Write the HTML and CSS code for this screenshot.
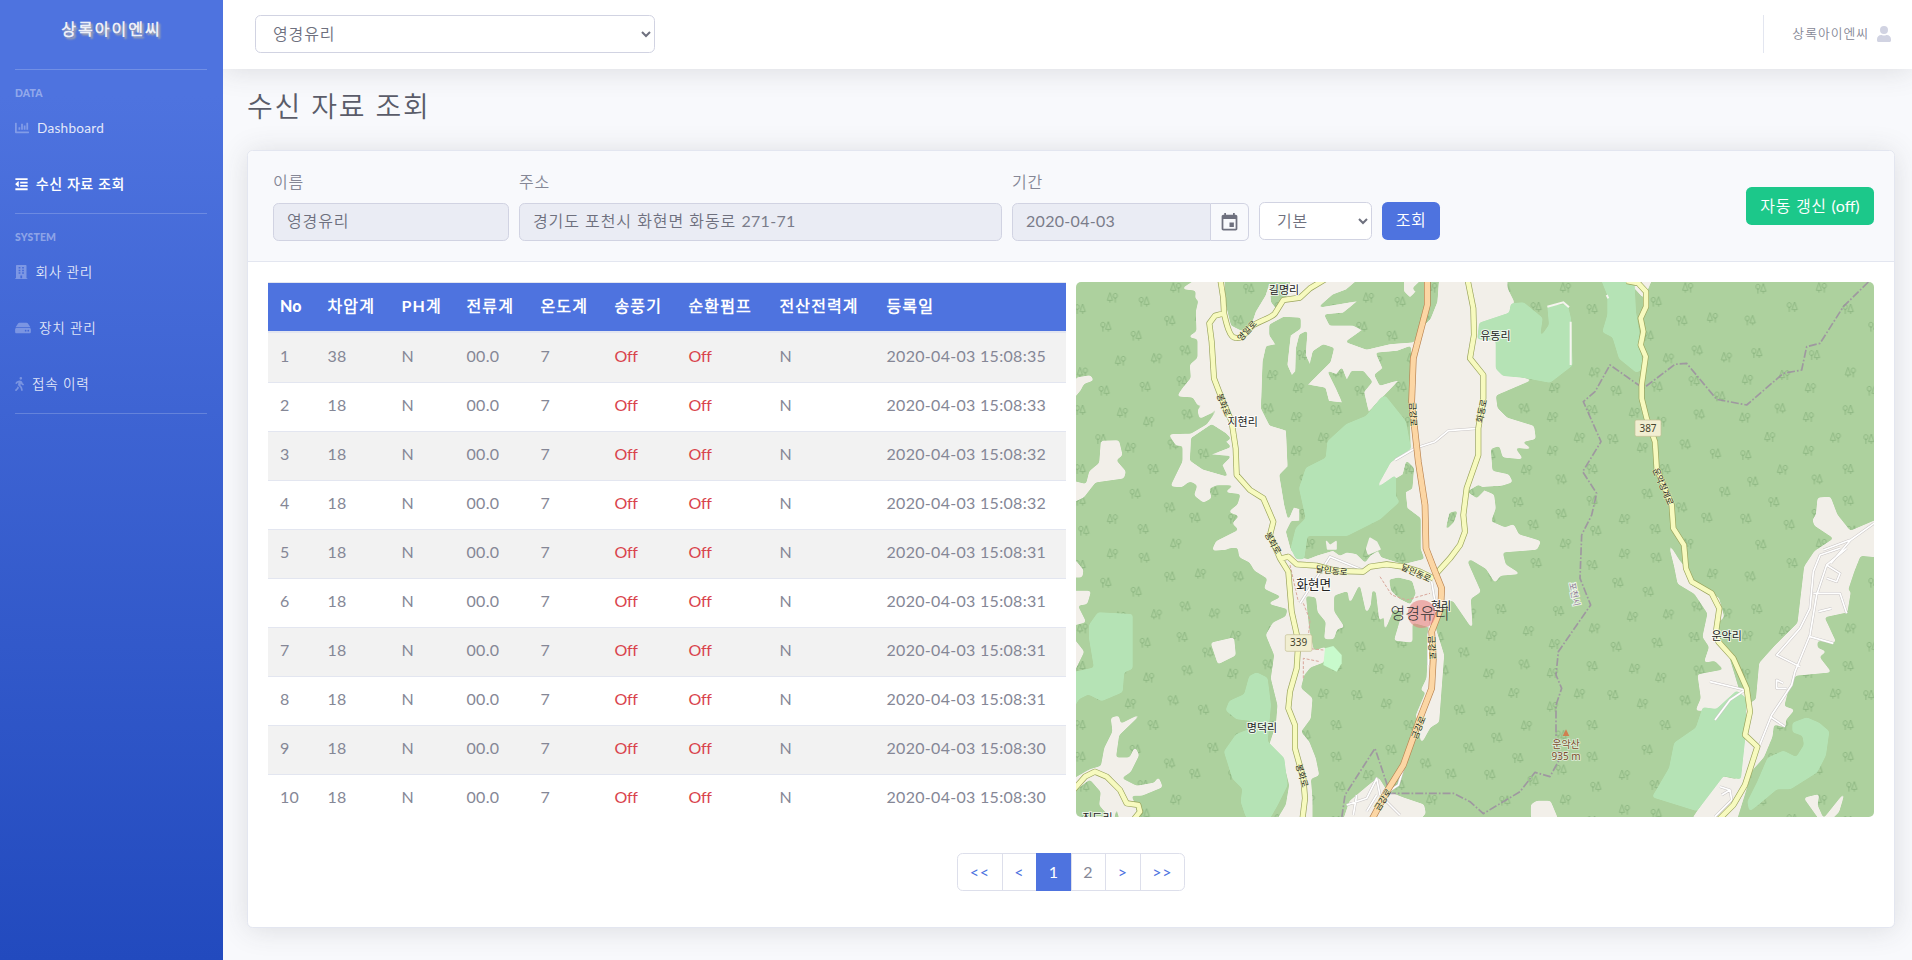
FILE: index.html
```html
<!DOCTYPE html>
<html lang="ko">
<head>
<meta charset="utf-8">
<title>수신 자료 조회</title>
<link rel="stylesheet" href="styles.css">
</head>
<body>
<div class="wrapper">
  <nav class="sidebar">
    <a class="brand">상록아이엔씨</a>
    <hr class="divider">
    <div class="heading">DATA</div>
    <a class="nav-link"><svg class="ico" width="14" height="14" viewBox="0 0 512 512"><path d="M332.800 320h38.400c6.400 0 12.800-6.400 12.800-12.800V172.800c0-6.400-6.400-12.800-12.800-12.800h-38.400c-6.400 0-12.800 6.400-12.800 12.800v134.400c0 6.400 6.400 12.800 12.800 12.800zm96 0h38.400c6.400 0 12.800-6.400 12.800-12.800V76.800c0-6.400-6.400-12.800-12.800-12.800h-38.400c-6.400 0-12.800 6.400-12.800 12.800v230.400c0 6.400 6.400 12.800 12.800 12.800zm-288 0h38.400c6.400 0 12.800-6.400 12.800-12.800v-70.400c0-6.400-6.400-12.800-12.800-12.800h-38.400c-6.400 0-12.800 6.400-12.800 12.800v70.400c0 6.400 6.400 12.800 12.800 12.800zm96 0h38.400c6.400 0 12.800-6.400 12.800-12.800V108.800c0-6.400-6.400-12.800-12.800-12.800h-38.400c-6.400 0-12.800 6.400-12.800 12.800v198.400c0 6.400 6.400 12.800 12.800 12.800zM496 384H64V80c0-8.800-7.200-16-16-16H16C7.200 64 0 71.200 0 80v336c0 17.700 14.300 32 32 32h464c8.800 0 16-7.200 16-16v-32c0-8.800-7.200-16-16-16z"/></svg><span class="latin">Dashboard</span></a>
    <a class="nav-link active"><svg class="ico" width="13" height="14" viewBox="0 0 448 512"><path d="M0 42h448v70H0zM176 170h272v66H176zM176 292h272v66H176zM0 412h448v70H0zM4 250l96-92c10-9 24-4 24 10v180c0 14-14 19-24 10L4 272c-6-6-6-16 0-22z"/></svg><span>수신 자료 조회</span></a>
    <hr class="divider">
    <div class="heading">SYSTEM</div>
    <a class="nav-link"><svg class="ico" width="12.500" height="14" viewBox="0 0 448 512"><path fill-rule="evenodd" d="M436 480h-20V24c0-13-11-24-24-24H56C43 0 32 11 32 24v456H12c-7 0-12 5-12 12v20h448v-20c0-7-5-12-12-12zM128 76h64v56h-64zM128 172h64v56h-64zM128 268h64v56h-64zM256 76h64v56h-64zM256 172h64v56h-64zM256 268h64v56h-64zM192 384h64v96h-64z"/></svg><span>회사 관리</span></a>
    <a class="nav-link"><svg class="ico" width="16" height="14" viewBox="0 0 576 512"><path fill-rule="evenodd" d="M576 304v96c0 27-21 48-48 48H48c-27 0-48-21-48-48v-96c0-27 21-48 48-48h480c27 0 48 21 48 48zm-48-80c11 0 22 2 32 7L463 86c-9-14-24-22-40-22H153c-16 0-31 8-40 22L16 231c10-5 21-7 32-7h480zm-48 96a32 32 0 1 0 0 64 32 32 0 0 0 0-64zm-96 0a32 32 0 1 0 0 64 32 32 0 0 0 0-64z"/></svg><span>장치 관리</span></a>
    <a class="nav-link"><svg class="ico" width="9" height="14" viewBox="0 0 320 512"><path d="M208 96a48 48 0 1 0 0-96 48 48 0 0 0 0 96zm94.500 149.100-23.300-11.800-9.700-29.400c-14.700-44.600-55.700-75.800-102.200-75.900-36-.1-55.900 10.100-93.300 25.200-21.600 8.700-39.300 25.200-49.700 46.200L17.600 213c-7.800 15.800-1.500 35 14.200 42.900 15.600 7.900 34.600 1.500 42.500-14.300L81 228c3.500-7 9.300-12.500 16.500-15.400l26.800-10.800-15.200 60.700c-5.200 20.800.4 42.900 14.900 58.800l59.900 65.400c7.200 7.900 12.300 17.400 14.900 27.700l18.300 73.300c4.300 17.100 21.700 27.600 38.800 23.300 17.100-4.300 27.600-21.700 23.300-38.800l-22.200-89c-2.600-10.300-7.700-19.900-14.900-27.700l-45.500-49.700 17.200-68.700 5.500 16.500c5.300 16.100 16.700 29.400 31.700 37l23.300 11.800c15.600 7.900 34.600 1.500 42.500-14.300 7.700-15.700 1.400-35.100-14.300-43zM73.600 385.800c-3.200 8.100-8 15.400-14.200 21.500l-50 50.100c-12.500 12.500-12.500 32.800 0 45.300s32.700 12.500 45.200 0l59.400-59.400c6.100-6.100 10.900-13.400 14.200-21.500l13.500-33.800c-55.300-60.300-38.700-41.800-47.400-53.700l-20.700 51.500z"/></svg><span>접속 이력</span></a>
    <hr class="divider">
  </nav>

  <div class="content">
    <header class="topbar">
      <select class="control site-select"><option>영경유리</option></select>
      <div class="user"><span>상록아이엔씨</span><svg width="14" height="16" viewBox="0 0 448 512"><path fill="#d1d3e2" d="M224 256A128 128 0 1 0 224 0a128 128 0 0 0 0 256zm90 32h-17a174 174 0 0 1-146 0h-17C60 288 0 348 0 422v42c0 27 21 48 48 48h352c27 0 48-21 48-48v-42c0-74-60-134-134-134z"/></svg></div>
    </header>

    <main class="main">
      <h1>수신 자료 조회</h1>
      <section class="card">
        <div class="card-header">
          <div class="field name"><label>이름</label><div class="control readonly">영경유리</div></div>
          <div class="field addr"><label>주소</label><div class="control readonly">경기도 포천시 화현면 화동로 <span class="latin">271-71</span></div></div>
          <div class="field date"><label>기간</label>
            <div class="group"><div class="control readonly latin">2020-04-03</div><div class="cal"><svg width="24" height="24" viewBox="0 0 24 24"><path fill="#6e707e" d="M17 12h-5v5h5v-5zM16 1v2H8V1H6v2H5c-1.110 0-1.990.9-1.990 2L3 19c0 1.100.89 2 2 2h14c1.100 0 2-.9 2-2V5c0-1.100-.9-2-2-2h-1V1h-2zm3 18H5V8h14v11z"/></svg></div></div>
          </div>
          <select class="control kind"><option>기본</option></select>
          <button class="btn primary">조회</button>
          <button class="btn success">자동 갱신 <span class="latin">(off)</span></button>
        </div>
        <div class="card-body">
          <div class="columns">
            <table>
              <colgroup><col class="c1"><col class="c2"><col class="c3"><col class="c4"><col class="c5"><col class="c6"><col class="c7"><col class="c8"><col class="c9"></colgroup>
              <thead><tr><th class="latin">No</th><th>차압계</th><th>PH계</th><th>전류계</th><th>온도계</th><th>송풍기</th><th>순환펌프</th><th>전산전력계</th><th>등록일</th></tr></thead>
              <tbody>
                <tr><td>1</td><td>38</td><td>N</td><td>00.0</td><td>7</td><td class="off">Off</td><td class="off">Off</td><td>N</td><td>2020-04-03 15:08:35</td></tr>
                <tr><td>2</td><td>18</td><td>N</td><td>00.0</td><td>7</td><td class="off">Off</td><td class="off">Off</td><td>N</td><td>2020-04-03 15:08:33</td></tr>
                <tr><td>3</td><td>18</td><td>N</td><td>00.0</td><td>7</td><td class="off">Off</td><td class="off">Off</td><td>N</td><td>2020-04-03 15:08:32</td></tr>
                <tr><td>4</td><td>18</td><td>N</td><td>00.0</td><td>7</td><td class="off">Off</td><td class="off">Off</td><td>N</td><td>2020-04-03 15:08:32</td></tr>
                <tr><td>5</td><td>18</td><td>N</td><td>00.0</td><td>7</td><td class="off">Off</td><td class="off">Off</td><td>N</td><td>2020-04-03 15:08:31</td></tr>
                <tr><td>6</td><td>18</td><td>N</td><td>00.0</td><td>7</td><td class="off">Off</td><td class="off">Off</td><td>N</td><td>2020-04-03 15:08:31</td></tr>
                <tr><td>7</td><td>18</td><td>N</td><td>00.0</td><td>7</td><td class="off">Off</td><td class="off">Off</td><td>N</td><td>2020-04-03 15:08:31</td></tr>
                <tr><td>8</td><td>18</td><td>N</td><td>00.0</td><td>7</td><td class="off">Off</td><td class="off">Off</td><td>N</td><td>2020-04-03 15:08:31</td></tr>
                <tr><td>9</td><td>18</td><td>N</td><td>00.0</td><td>7</td><td class="off">Off</td><td class="off">Off</td><td>N</td><td>2020-04-03 15:08:30</td></tr>
                <tr><td>10</td><td>18</td><td>N</td><td>00.0</td><td>7</td><td class="off">Off</td><td class="off">Off</td><td>N</td><td>2020-04-03 15:08:30</td></tr>
              </tbody>
            </table>

            <svg class="map" viewBox="18 21 2394 1605" preserveAspectRatio="none">
              <defs>
                <g id="a" class="tree"><path d="M-8 15V-2M-8-13c-5 0-6 3-6 8s3 7 6 7 6-3 6-7-1-8-6-8zM8 15V8M8-15L0 8h16z"/></g>
                <g id="b" class="tree"><path d="M8 15V-2M8-13c-5 0-6 3-6 8s3 7 6 7 6-3 6-7-1-8-6-8zM-8 15V8M-8-15l-8 23H0z"/></g>
                <filter id="soft" filterUnits="userSpaceOnUse" x="0" y="0" width="2440" height="1660" color-interpolation-filters="sRGB">
                  <feGaussianBlur in="SourceAlpha" stdDeviation="5"/>
                  <feComponentTransfer result="shape"><feFuncA type="linear" slope="5" intercept="-2"/></feComponentTransfer>
                  <feMorphology in="SourceGraphic" operator="dilate" radius="4" result="grown"/>
                  <feComposite in="grown" in2="shape" operator="in"/>
                </filter>
                <filter id="trim" filterUnits="userSpaceOnUse" x="0" y="0" width="2440" height="1660" color-interpolation-filters="sRGB">
                  <feGaussianBlur in="SourceAlpha" stdDeviation="5"/>
                  <feComponentTransfer result="shape"><feFuncA type="linear" slope="5" intercept="-2"/></feComponentTransfer>
                  <feComposite in="SourceGraphic" in2="shape" operator="in"/>
                </filter>
                <pattern id="forest" patternUnits="userSpaceOnUse" x="10" y="15" width="768" height="768" viewBox="10 15 768 768">
                  <rect x="10" y="15" width="768" height="768" fill="#add19e"/>
                  <use href="#b" x="128" y="68"/><use href="#a" x="222" y="80"/><use href="#a" x="30" y="102"/><use href="#a" x="107" y="155"/><use href="#a" x="198" y="182"/><use href="#a" x="299" y="137"/><use href="#b" x="318" y="38"/><use href="#a" x="345" y="226"/><use href="#b" x="152" y="257"/><use href="#b" x="260" y="250"/><use href="#b" x="38" y="292"/><use href="#a" x="102" y="347"/><use href="#a" x="225" y="335"/><use href="#a" x="336" y="318"/><use href="#a" x="30" y="405"/><use href="#b" x="158" y="413"/><use href="#b" x="237" y="440"/><use href="#a" x="351" y="418"/><use href="#a" x="92" y="492"/><use href="#b" x="182" y="518"/><use href="#a" x="249" y="582"/><use href="#a" x="309" y="508"/><use href="#a" x="400" y="536"/><use href="#a" x="195" y="656"/><use href="#b" x="128" y="732"/><use href="#a" x="298" y="697"/><use href="#a" x="374" y="728"/><use href="#a" x="219" y="762"/><use href="#a" x="41" y="767"/><use href="#a" x="428" y="650"/><use href="#a" x="491" y="731"/><use href="#a" x="536" y="41"/><use href="#a" x="504" y="136"/><use href="#b" x="608" y="300"/><use href="#a" x="594" y="400"/><use href="#b" x="680" y="426"/><use href="#b" x="686" y="339"/><use href="#b" x="761" y="488"/><use href="#b" x="680" y="527"/><use href="#a" x="697" y="240"/><use href="#b" x="719" y="38"/><use href="#a" x="630" y="96"/><use href="#b" x="602" y="584"/><use href="#a" x="705" y="613"/><use href="#a" x="575" y="681"/><use href="#a" x="705" y="716"/><use href="#a" x="621" y="749"/><use href="#b" x="392" y="128"/><use href="#b" x="434" y="247"/><use href="#a" x="524" y="234"/><use href="#b" x="497" y="314"/><use href="#a" x="413" y="364"/><use href="#b" x="489" y="428"/><use href="#b" x="564" y="486"/><use href="#a" x="491" y="540"/><use href="#a" x="512" y="620"/><use href="#a" x="30" y="582"/><use href="#a" x="30" y="677"/>
                </pattern>
                <path id="lanes" d="M975 555l60-35 60-20 40-33 90-7M690 985l90-140 110 45M1085 920l10 60-20 100v90M1000 1480l-15 50-30 20M830 1590l60-20 30-60 10 50 60 60M850 1620l10-60M890 1610l30-50M1935 1335l45-60 45-30-105-25M2330 820l-60 50-30 90-20 120-45 110-10 40-60 90-40 100M2310 820l-60 20-20 50-10 110-30 60-70 80 70 35M2230 955l80 0 20 60M2245 1010l40-10M2220 1085l70 20M2270 870l40 25-10 25-30-10M2150 1240h-30l0-25 20 10M2100 1325l45 30M1950 1535l30 10 5 30-50 50M1955 1560l25-15M2412 745l-70 50-60 70M2340 795l-80 30"/>
                <path id="roads" d="M450 10C456 40 462 60 462 115 468 140 478 188 495 188 520 195 530 165 550 150 575 135 605 128 615 115L640 75 690 68 720 40 770 10M462 115L435 122 418 145 425 200 432 310 455 370 485 440 497 520 500 600 540 645 580 670 610 740 600 780 630 850 655 890 665 1010 685 1100 680 1180 660 1250 655 1300 675 1350 675 1420 700 1510 705 1570 697 1635M635 850L655 845 680 868 740 872 800 888 880 890 900 875 950 868 1000 875 1050 890 1090 910M1192 10L1210 100 1212 180 1200 250 1240 300 1240 370 1225 460 1225 540 1190 640 1180 720 1185 770 1170 810 1140 850 1095 900M1670 18L1705 25 1728 50 1728 95 1712 130 1720 170 1712 210 1727 245 1715 330 1715 370 1730 430 1755 500 1760 580 1805 690 1810 760 1842 810 1848 880 1865 920 1925 955 1948 1000 1938 1070 1945 1100 1990 1150 2030 1240 2040 1310 2025 1380 2062 1415 2025 1530 1990 1590 1945 1635M10 1545L45 1505 75 1490 110 1505 150 1545 170 1585 205 1590 210 1610 190 1635"/>
                <path id="highway" d="M1072 10V90L1030 250 1025 380 1045 560 1065 690 1068 820 1095 890 1115 940 1112 1000 1085 1070 1090 1150 1085 1240 1050 1330 1000 1470 950 1550 905 1635"/>
              </defs>
              <rect class="forest" width="2430" height="1640"/>
              <!-- open land -->
              <g class="land" filter="url(#soft)">
                <path d="M385 11L340 40 380 45 378 70 388 75 380 110 382 170 360 185 385 190 385 250 362 270 365 310 340 340 325 362 370 365 385 390 412 372 405 385 385 405 390 428 425 412 445 385 440 410 425 432 412 450 365 478 300 480 320 510 340 510 340 560 305 632 335 634 360 615 385 630 375 660 400 680 422 668 415 640 440 628 500 628 470 650 515 655 505 690 480 710 512 722 490 745 510 765 440 800 430 822 505 815 510 845 540 860 555 885 595 910 585 940 640 965 600 985 655 1000 650 1025 610 1045 590 1080 615 1140 605 1210 625 1290 620 1350 600 1410 640 1450 660 1530 650 1590 620 1640 725 1640 725 1570 720 1510 745 1500 735 1450 715 1400 690 1370 720 1330 725 1270 690 1240 700 1200 720 1175 760 1160 765 1118 730 1130 715 1060 705 960 740 965 745 1010 770 1040 765 1090 790 1090 800 1060 820 1055 790 1010 790 960 835 945 840 980 870 920 890 1010 900 990 905 940 920 950 930 1035 945 1010 945 1060 970 1000 1000 1010 975 1095 1025 1100 1025 1040 1080 1055 1072 1210 1055 1245 1070 1250 1040 1320 1055 1400 1080 1355 1105 1340 1120 1140 1095 1060 1100 980 1150 975 1205 1055 1200 970 1230 950 1190 860 1200 850 1250 880 1275 920 1290 900 1345 895 1305 870 1295 830 1400 822 1410 800 1345 780 1330 750 1305 760 1260 740 1275 700 1270 660 1210 635 1295 630 1325 620 1315 600 1265 590 1260 520 1290 510 1300 545 1355 550 1330 515 1380 520 1350 500 1395 490 1390 455 1310 430 1280 400 1275 360 1310 345 1380 315 1310 300 1285 290 1280 190 1230 145 1320 110 1330 80 1310 40 1310 11z"/>
                <path d="M95 500l50-2 10 42-20 15 30 35-5 18-85 12-35 45-32 15v-60l42 10 10-40 30-25zM8 370l12-60 40-7 8 12-28 10-10 20zM8 850l30 35-3 20H8zM8 950h52l-10 35-30 5 25 50-37 10zM8 1090l32 40-32 65zM425 1105l65-15 5 50-50 25zM430 825l20-15h30l-10 12z"/>
                <path d="M125 1330l20-5 5 25 55-28-40 38-20 20-10 70h45l15-30 10 20-25 50-30 20 50 25 55-10 10-15 10 25-60 25h-35l10 20 15 55h-55l-10-55-10 55-40-45 5-40-35-40-52 40v-35l52-30 35-10 10-55 25-50z"/>
                <path d="M820 1640l20-60 60-50 25-20 25 40 50 20 60 20 5 25-25 25zM1385 1640v-50l15-10h40l25 60zM1670 11h75l-15 35-10 20zM2205 1570l40-10-5 30 20 45 60-75-15 50-30 30h-20z"/>
                <path d="M2245 670l35-2 20 52 40 50 90-38v113l-60-5-20 50-20 60h10l-10 60-70 15 35 75-55-5v25l25 10-20 15 35 45-105 10-25 55-10 40 30 10-25 30v20l-35-10-5 40-25 60-35 40-45 145h-130l30-45 50-80 50 10 15-30 10-240-20 0-35 60h-90l15-35-10-70 80-15-30-30-30 5 15-45-20-30 15-70-40-60-50-30-10-50-15-60 25 40 40 50v30l40 10 40 25 15 55-30 30 45 90 30 100 20 50 35-20 10-110 45-50 70-70 20-170 30-45 60-40-60-40-5-15 10-15z"/>
              </g>
              <!-- woods inside the valley -->
              <g class="forest grow" filter="url(#trim)">
                <path d="M465 11H600L585 60 555 110 540 155 515 165 485 150 470 90zM600 11h60l-10 49-30 40-15-20zM750 95l40-35 40-15 40-34h130v39l20 20 20-20-10-10 30-29h45l-5 69-20 50-30 30-20 40-70 5-70 17-60-22 50-35-30-15-70 0-15-30 55-5 50-40zM365 490l60-40 40 25 15 15-15 10 15 15-65 25 65 5-25 25 15 32-70-20-38-26z"/>
                <path d="M600 150L640 128 690 130 690 160 660 180 650 270 665 305 678 290 680 220 690 180 710 170 705 240 720 275 730 230 760 210 790 220 780 260 740 300 710 330 765 340 775 380 820 385 800 340 775 290 800 300 815 280 830 320 845 290 880 290 905 320 880 350 895 415 930 375 945 362 995 310 930 330 915 300 940 280 920 235 980 230 1020 215 1025 250 1015 340 1020 520 950 560 910 650 930 640 1000 600 1010 560 1030 580 1025 640 1005 650 1010 700 1050 730 1050 822 1060 850 1000 865 935 845 925 825 900 840 885 860 860 835 830 830 810 840 790 825 740 840 715 850 690 845 665 825 650 770 665 740 690 740 690 700 670 695 655 730 645 690 630 600 655 575 650 465 600 450 575 400 580 260 590 215 620 210 600 180z"/>
                <path d="M965 945l-5-30 25-5 40 10 10 35-15 30-30-15zM1195 650l30-18 20 10-25 25zM1150 740l-20 20 10-45 20-5z"/>
              </g>
              <path class="land" d="M890 822l10-32 20 12 10 20-35 15zM770 800l10 12 18-12v22h-25z"/>
              <g class="wood" filter="url(#soft)">
                <path d="M945 365L1005 440 1020 520 960 560 910 650 975 605 975 665 985 680 930 730 830 780 710 780 700 850 680 850 665 820 680 760 710 730 690 640 710 580 770 550 775 500 830 450 890 425 935 370z"/>
                <path d="M60 1090v-40l25-35 100 5v160l-25 10-5 60-60 25-40-20-30 15-17 30v-105l67-15zM540 1205l20-10 30 15 10 80-10 110 50 50 10 80-30 60-20 35h-70l-15-45 5-40-30-30-25-80 35-50 50-20-5-25-45-5-30-25 10-25 45-20z"/>
                <path d="M1230 145l90-30 5-27 35-3 55 45-10 70 35-50-5-55 55-5 10 40 5 140-65 50-80-15-60-5-20-20v-85l-55-5zM1595 11h95l5 99 10 60 10 110-15 10-50-40-20-65-30-15 15-50v-60z"/>
                <path d="M1900 1300l40 5 60-55 25 20v100l-15 140-50-10-80 105-130-40 50-85 15-75 65-45zM2170 1345l40-15 35 15 30 25-10 70-25 50-80 50-40 0-60 50-20 15-5-25 30-60 30-70 45-20 40 20 25-40-5-30-30-10z"/>
              </g>
              <path fill="#c8facc" d="M765 1120l25-7 25 27v25l-15 25-40-20z"/>
              <path class="white" d="M1432 95l48-13 17 15M1502 140v130M1610 60l5 10"/>
              <use href="#lanes" class="lane-edge"/>
              <use href="#lanes" class="lane"/>
              <path class="trail" d="M930 905l35 55 45 15 70-20M700 985l20 50-5 50M700 1210v-60l50 10M710 1120l50 5M660 870l25 110"/>
              <path class="border" d="M2395 21L2320 95 2250 205 2210 215 2195 285 2140 295 2030 390 1940 373 1850 265 1815 268 1720 340 1620 270 1575 350 1540 380 1593 500 1538 590 1580 655 1565 720 1535 780 1530 910 1562 990 1465 1130 1458 1200 1475 1240 1458 1290 1458 1400 1470 1450 1440 1505 1395 1492 1350 1550 1240 1616 1200 1580 1150 1555 960 1555 915 1420 825 1560 815 1630"/>
              <!-- main roads: casing then fill -->
              <use href="#roads" class="casing"/>
              <use href="#roads" class="yellow"/>
              <use href="#highway" class="orange-edge"/>
              <use href="#highway" class="orange"/>
              <g class="shield"><rect x="646" y="1079" width="80" height="50" rx="5"/><rect x="1695" y="435" width="78" height="49" rx="5"/></g>
              <g class="num"><text x="686" y="1114">339</text><text x="1734" y="470">387</text></g>
              <g class="place">
                <text x="642" y="58">길명리</text><text x="518" y="454">지현리</text><text x="1276" y="195">유동리</text><text x="576" y="1371">명덕리</text><text x="1970" y="1095">운악리</text><text x="82" y="1641">진도리</text><text x="1113" y="1005">현리</text><text class="town" x="731" y="942">화현면</text>
              </g>
              <g class="road-name">
                <text transform="translate(532 168) rotate(-48)" y="8">영일로</text>
                <text transform="translate(460 390) rotate(68)" y="8">봉화로</text>
                <text transform="translate(608 805) rotate(60)" y="8">봉화로</text>
                <text transform="translate(695 1502) rotate(74)" y="8">봉화로</text>
                <text transform="translate(1028 418) rotate(88)" y="8">금강로</text>
                <text transform="translate(1085 1118) rotate(88)" y="8">금강로</text>
                <text transform="translate(1047 1358) rotate(-68)" y="8">금강로</text>
                <text transform="translate(940 1575) rotate(-58)" y="8">금강로</text>
                <text transform="translate(785 888) rotate(6)" y="8">달인동로</text>
                <text transform="translate(1038 895) rotate(25)" y="8">달인동로</text>
                <text transform="translate(1236 408) rotate(-78)" y="8">화동로</text>
                <text transform="translate(1778 635) rotate(67)" y="8">운악청계로</text>
              </g>
              <text class="city" transform="translate(1512 958) rotate(78)" y="8">포천시</text>
              <path fill="#d08050" d="M1488 1363l10 20h-20z"/>
              <g class="peak"><text x="1488" y="1418">운악산</text><text x="1488" y="1455">935 m</text></g>
              <circle cx="1055" cy="1017" r="42" fill="#e87979" fill-opacity=".55"/>
              <text class="marker" x="1050" y="1031">영경유리</text>
            </svg>
          </div>
          <div class="pager"><a>&lt;&lt;</a><a>&lt;</a><a class="on">1</a><a class="muted">2</a><a>&gt;</a><a>&gt;&gt;</a></div>
        </div>
      </section>
    </main>
  </div>
</div>
</body>
</html>
```
FILE: styles.css
```css
* { box-sizing: border-box; }
body {
  margin: 0;
  height: 960px;
  overflow: hidden;
  background: #f8f9fc;
  color: #858796;
  font: 350 16px/24px Lato, "Noto Sans CJK KR DemiLight", "Noto Sans CJK KR", sans-serif;
  letter-spacing: .8px;
}
.wrapper { display: flex; height: 960px; }

.sidebar {
  width: 223px;
  flex: none;
  display: flex;
  flex-direction: column;
  position: relative;
  z-index: 1;
  background: linear-gradient(180deg, #4e73df 10%, #224abe 100%);
}
.brand {
  height: 69px;
  padding-top: 17px;
  text-align: center;
  font-size: 16px;
  font-weight: 700;
  color: #eef0f8;
  letter-spacing: 2px;
  text-shadow: 2px 2px 2px #a9a9a9;
}
.divider { width: 192px; margin: 0 0 0 15px; border: 0; border-top: 1px solid rgba(255, 255, 255, .2); flex: none; }
.heading {
  height: 31px;
  padding: 15px 15px 0;
  font: 900 10.4px/17px Lato, sans-serif;
  color: rgba(255, 255, 255, .4);
  letter-spacing: .2px;
}
.nav-link {
  height: 56px;
  padding: 0 15px 2px;
  display: flex;
  align-items: center;
  gap: 8px;
  font-size: 13.6px;
  font-weight: 400;
  color: rgba(255, 255, 255, .85);
  letter-spacing: .8px;
}
.nav-link .latin { letter-spacing: .25px; }
.nav-link .ico { fill: rgba(255, 255, 255, .3); flex: none; }
.nav-link.active { font-weight: 700; color: #fff; letter-spacing: .95px; }
.nav-link.active .ico { fill: #fff; }

.content { flex: 1; min-width: 0; }
.topbar {
  height: 69px;
  padding: 15px 21px 0 32px;
  display: flex;
  justify-content: space-between;
  background: #fff;
  box-shadow: 0 2px 28px rgba(58, 59, 69, .15);
}
.control {
  height: 38px;
  padding: 5px 12px 7px 13px;
  border: 1px solid #d1d3e2;
  border-radius: 5.600px;
  background: #fff;
  color: #6e707e;
  font: inherit;
  letter-spacing: .9px;
}
.site-select { width: 400px; }
.user {
  height: 38px;
  padding-left: 28px;
  display: flex;
  align-items: center;
  gap: 8px;
  border-left: 1px solid #e3e6f0;
  font-size: 12.8px;
  letter-spacing: 1px;
}
.user span { margin-top: -3px; }

.main { padding: 20px 17px 0 24px; }
h1 {
  margin: 0 0 27px;
  font-size: 28px;
  line-height: 34px;
  font-weight: 350;
  color: #5a5c69;
  letter-spacing: 1.7px;
}
.card {
  height: 778px;
  border: 1px solid #e3e6f0;
  border-radius: 5.600px;
  background: #fff;
  box-shadow: 0 2px 28px rgba(58, 59, 69, .15);
}
.card-header {
  height: 111px;
  padding: 0 20px 0 25px;
  display: flex;
  align-items: flex-start;
  background: #f8f9fc;
  border-bottom: 1px solid #e3e6f0;
  border-radius: 5.600px 5.600px 0 0;
}
.field { padding-top: 19px; margin-right: 10px; }
.field label { display: block; height: 33px; }
.name { width: 236px; }
.addr { width: 483px; }
.date { width: 237px; }
.readonly { background: #eaecf4; }
.group { display: flex; }
.group .control { flex: 1; border-radius: 5.600px 0 0 5.600px; }
.cal {
  width: 38px;
  height: 38px;
  display: grid;
  place-items: center;
  border: 1px solid #d1d3e2;
  border-left: 0;
  border-radius: 0 5.600px 5.600px 0;
}
.cal svg { width: 21px; height: 21px; }
.kind { width: 113px; margin: 51px 10px 0 0; }
.btn {
  height: 38px;
  border: 0;
  border-radius: 5.600px;
  color: #fff;
  font: inherit;
  letter-spacing: .6px;
}
.primary { width: 58px; margin-top: 51px; padding: 0 0 2px; background: #4e73df; }
.success { width: 128px; margin: 36px 0 0 auto; padding: 0 0 1px; background: #1cc88a; }

.card-body { padding: 20px 20px 0 20px; }
.columns { display: flex; justify-content: space-between; height: 535px; }
table { width: 798px; height: 540px; table-layout: fixed; border-collapse: separate; border-spacing: 0; }
.c1 { width: 47.5px; } .c2 { width: 74px; } .c3 { width: 65px; } .c4 { width: 74px; }
.c5 { width: 74px; } .c6 { width: 74px; } .c7 { width: 91px; } .c8 { width: 107px; }
th {
  height: 51px;
  padding: 0 0 2px 12px;
  background: #4e73df;
  border-top: 1px solid #e3e6f0;
  border-bottom: 2px solid #e3e6f0;
  color: #fff;
  text-align: left;
  font-weight: 700;
  white-space: nowrap;
  letter-spacing: 1.1px;
}
td { height: 49px; padding: 0 0 5px 12px; border-top: 1px solid #e3e6f0; font-weight: 400; letter-spacing: .3px; white-space: nowrap; }
tr:first-child td { border-top-color: #f2f2f2; }
tbody tr:nth-child(odd) { background: #f2f2f2; }
.off { color: #d9434b; letter-spacing: -.3px; }
.latin { font-weight: 400; letter-spacing: .2px; }
.control .latin, .control.latin { color: #7a7c8a; letter-spacing: .3px; }
.success .latin { letter-spacing: 0; }
th.latin { font-weight: 900; }

.pager { display: flex; width: 228px; height: 38px; margin: 36px auto 0; }
.pager a {
  flex: 1 1 35px;
  display: grid;
  place-items: center;
  padding-bottom: 1px;
  border: 1px solid #dddfeb;
  margin-left: -1px;
  color: #4e73df;
  font-weight: 400;
}
.pager a:first-child { flex-basis: 45px; border-radius: 5.600px 0 0 5.600px; margin-left: 0; }
.pager a:last-child { flex-basis: 45px; border-radius: 0 5.600px 5.600px 0; }
.pager .on { background: #4e73df; border-color: #4e73df; color: #fff; }
.pager .muted { color: #858796; }

.map { width: 798px; height: 535px; border-radius: 5px; font-family: "Noto Sans", "Noto Sans CJK KR", sans-serif; letter-spacing: 0; font-weight: 400; }
.map text { text-anchor: middle; }
.tree { fill: none; stroke: #82ad79; stroke-width: 2.1; }
.forest { fill: url(#forest); }
.grow { stroke: url(#forest); stroke-width: 5; stroke-linejoin: round; }
.land { fill: #f2efe9; stroke: #f2efe9; stroke-width: 5; stroke-linejoin: round; }
.wood { fill: #b5e3b5; stroke: #b5e3b5; stroke-width: 6; stroke-linejoin: round; }
.white { fill: none; stroke: #f6f4ef; stroke-width: 6; }
.lane-edge, .lane, .trail, .border, .casing, .yellow, .orange, .orange-edge { fill: none; stroke-linejoin: round; }
.lane-edge { stroke: #c9c5c5; stroke-width: 8; }
.lane { stroke: #fff; stroke-width: 5; }
.trail { stroke: #d9a79b; stroke-width: 3; stroke-dasharray: 9 5; }
.border { stroke: #9b8aa0; stroke-opacity: .8; stroke-width: 5; stroke-dasharray: 24 6 5 6; }
.casing { stroke: #9aa45c; stroke-width: 18; }
.yellow { stroke: #f7fabf; stroke-width: 14; }
.orange-edge { stroke: #b98350; stroke-width: 20; }
.orange { stroke: #fcd6a4; stroke-width: 16; }
.shield rect { fill: #f1eed1; stroke: #c4bf94; stroke-width: 2; }
.num { font-size: 30px; fill: #44442c; }
.place { font-size: 33px; fill: #222; }
.place text, .road-name text, .city { stroke: #fff; stroke-opacity: .75; stroke-width: 6px; paint-order: stroke; }
.place .town { font-size: 38px; }
.road-name { font-size: 26px; fill: #222; }
.road-name text { stroke: #f7fabf; stroke-width: 3px; }
.city { font-size: 26px; fill: #8d7b93; }
.peak { font-size: 30px; fill: #7c4f2c; stroke: #fff; stroke-opacity: .6; stroke-width: 5px; paint-order: stroke; }
.map .marker { font-size: 48px; font-weight: 300; fill: #333; }
```
